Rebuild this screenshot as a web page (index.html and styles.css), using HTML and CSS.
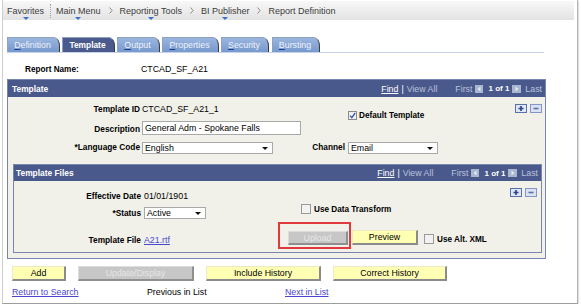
FILE: index.html
```html
<!DOCTYPE html>
<html>
<head>
<meta charset="utf-8">
<link rel="stylesheet" href="styles.css">
</head>
<body>
<div class="frame">
  <div class="crumbs">
    <span class="crumb dd">Favorites</span>
    <span class="dots"></span>
    <span class="crumb dd">Main Menu</span>
    <span class="chev"><svg width="4" height="7" viewBox="0 0 4 7"><path d="M0.5 0.5L3.2 3.5L0.5 6.5" fill="none" stroke="#8a8a8a" stroke-width="1"/></svg></span>
    <span class="crumb dd">Reporting Tools</span>
    <span class="chev"><svg width="4" height="7" viewBox="0 0 4 7"><path d="M0.5 0.5L3.2 3.5L0.5 6.5" fill="none" stroke="#8a8a8a" stroke-width="1"/></svg></span>
    <span class="crumb dd">BI Publisher</span>
    <span class="chev"><svg width="4" height="7" viewBox="0 0 4 7"><path d="M0.5 0.5L3.2 3.5L0.5 6.5" fill="none" stroke="#8a8a8a" stroke-width="1"/></svg></span>
    <span class="crumb">Report Definition</span>
  </div>

  <div class="tabs">
    <span class="tab t1"><u>D</u>efinition</span>
    <span class="tab t2 active">Template</span>
    <span class="tab t3"><u>O</u>utput</span>
    <span class="tab t4"><u>P</u>roperties</span>
    <span class="tab t5"><u>S</u>ecurity</span>
    <span class="tab t6"><u>B</u>ursting</span>
  </div>

  <div class="rname"><span class="rlabel">Report Name:</span><span>CTCAD_SF_A21</span></div>

  <section class="box outer">
    <div class="bar">
      <span class="title">Template</span>
      <div class="nav">
        <span class="find">Find</span><span class="pipe">|</span><span class="dis">View All</span>
        <span class="dis first">First</span>
        <svg class="nicon" width="8" height="8" viewBox="0 0 8 8"><rect width="8" height="8" fill="#a8b6d0"/><path d="M5.5 1.5L2.5 4L5.5 6.5Z" fill="#e3e8f2"/></svg>
        <b class="count">1 of 1</b>
        <svg class="nicon" width="9" height="8" viewBox="0 0 9 8"><rect width="9" height="8" fill="#a8b6d0"/><path d="M3.5 1.5L6.5 4L3.5 6.5Z" fill="#e3e8f2"/></svg>
        <span class="dis last">Last</span>
      </div>
    </div>
    <div class="grid g1">
      <span class="lab">Template ID</span>
      <span class="val">CTCAD_SF_A21_1</span>
      <span></span>
      <span class="chk def">
        <svg width="9" height="9" viewBox="0 0 9 9"><rect x="0.5" y="0.5" width="8" height="8" fill="#eef0f3" stroke="#8c8c8c"/><path d="M2 4.6L3.8 6.6L7.2 2" fill="none" stroke="#3c5aa6" stroke-width="1.3"/></svg>
        <b>Default Template</b>
      </span>
      <span class="pm pm1">
        <svg width="12" height="9" viewBox="0 0 12 9"><rect x="0.5" y="0.5" width="11" height="8" fill="#dfe6f6" stroke="#5a70ad"/><path d="M6 2V7M3.5 4.5H8.5" stroke="#2b3f8c" stroke-width="1.6"/></svg>
        <svg width="12" height="9" viewBox="0 0 12 9"><rect x="0.5" y="0.5" width="11" height="8" fill="#dbe2f2" stroke="#8396c8"/><path d="M3.5 4.5H8.5" stroke="#5a70ad" stroke-width="1.6"/></svg>
      </span>

      <span class="lab">Description</span>
      <span class="input desc">General Adm - Spokane Falls</span>

      <span class="lab">*Language Code</span>
      <span class="select lang">English</span>
      <span class="lab2">Channel</span>
      <span class="select chan">Email</span>
    </div>

    <section class="box inner">
      <div class="bar ibar">
        <span class="title">Template Files</span>
        <div class="nav">
          <span class="find">Find</span><span class="pipe">|</span><span class="dis">View All</span>
          <span class="dis first">First</span>
          <svg class="nicon" width="8" height="8" viewBox="0 0 8 8"><rect width="8" height="8" fill="#a8b6d0"/><path d="M5.5 1.5L2.5 4L5.5 6.5Z" fill="#e3e8f2"/></svg>
          <b class="count">1 of 1</b>
          <svg class="nicon" width="9" height="8" viewBox="0 0 9 8"><rect width="9" height="8" fill="#a8b6d0"/><path d="M3.5 1.5L6.5 4L3.5 6.5Z" fill="#e3e8f2"/></svg>
          <span class="dis last">Last</span>
        </div>
      </div>
      <div class="grid g2">
        <span class="lab eff">Effective Date</span>
        <span class="val eff">01/01/1901</span>
        <span class="pm pm2">
          <svg width="12" height="9" viewBox="0 0 12 9"><rect x="0.5" y="0.5" width="11" height="8" fill="#dfe6f6" stroke="#5a70ad"/><path d="M6 2V7M3.5 4.5H8.5" stroke="#2b3f8c" stroke-width="1.6"/></svg>
          <svg width="12" height="9" viewBox="0 0 12 9"><rect x="0.5" y="0.5" width="11" height="8" fill="#dbe2f2" stroke="#8396c8"/><path d="M3.5 4.5H8.5" stroke="#5a70ad" stroke-width="1.6"/></svg>
        </span>

        <span class="lab">*Status</span>
        <span class="select status">Active</span>
        <span class="chk udt">
          <svg width="10" height="10" viewBox="0 0 10 10"><rect x="0.5" y="0.5" width="9" height="9" fill="#f2f2f2" stroke="#9a9a9a"/></svg>
          <b>Use Data Transform</b>
        </span>

        <span class="lab tf">Template File</span>
        <a class="link tf">A21.rtf</a>
        <span class="upwrap"><span class="btn disabled upload">Upload</span><span class="redbox"></span></span>
        <span class="btn preview">Preview</span>
        <span class="chk alt">
          <svg width="10" height="10" viewBox="0 0 10 10"><rect x="0.5" y="0.5" width="9" height="9" fill="#f2f2f2" stroke="#9a9a9a"/></svg>
          <b>Use Alt. XML</b>
        </span>
      </div>
    </section>
  </section>

  <div class="actions">
    <span class="btn b-add">Add</span>
    <span class="btn disabled b-upd">Update/Display</span>
    <span class="btn b-inc">Include History</span>
    <span class="btn b-cor">Correct History</span>
  </div>

  <div class="links">
    <a class="link">Return to Search</a>
    <span>Previous in List</span>
    <a class="link">Next in List</a>
  </div>
</div>
</body>
</html>
```

FILE: styles.css
```css
* { box-sizing: border-box; }

body {
  margin: 0;
  background: #fff;
  font-family: "Liberation Sans", Arial, sans-serif;
  font-size: 8.8px;
  color: #000;
}

.frame {
  margin-left: 2px;
  width: 576px;
  height: 304px;
  padding-top: 1px;
  border-left: 1px solid #cfcfcf;
  border-right: 1px solid #b4b4b4;
  border-bottom: 1px solid #9d9d9d;
  box-shadow: 1px 1px 1px rgba(0, 0, 0, 0.12);
}

/* breadcrumbs */
.crumbs {
  display: flex;
  align-items: center;
  height: 19px;
  margin-right: 3px;
  padding-left: 4px;
  background: linear-gradient(#f8f8f8, #e2e2e2);
  font-size: 9px;
  color: #3c3c3c;
}
.crumb { position: relative; }
.crumb.dd::after {
  content: "";
  position: absolute;
  left: 50%;
  margin-left: -3px;
  bottom: -4px;
  border-left: 3px solid transparent;
  border-right: 3px solid transparent;
  border-top: 3px solid #3b6fc9;
}
.dots {
  height: 14px;
  border-left: 1px dotted #a0a0a0;
  margin: 0 5px 0 6px;
}
.chev {
  display: flex;
  margin: 0 7px 0 8px;
}

/* tabs */
.tabs {
  display: flex;
  gap: 2px;
  margin: 17px 0 0 4px;
  width: 537px;
  height: 16px;
  border-bottom: 1px solid #c5d4ea;
}
.tab {
  height: 15px;
  display: flex;
  align-items: center;
  justify-content: center;
  padding-right: 2px;
  background: linear-gradient(#9ab5df, #7899cd);
  color: #eef2fa;
  border: 1px solid #8ea0c4;
  border-right-color: #3a3a3a;
  border-bottom: 0;
  border-top-right-radius: 6px 9px;
}
.tab u { text-decoration-color: #1d3f8f; }
.tab.active {
  background: #4a5a8c;
  color: #fff;
  font-weight: bold;
  font-size: 8.4px;
}
.t1 { width: 53px; }
.t2 { width: 53px; }
.t3 { width: 43px; }
.t4 { width: 57px; }
.t5 { width: 48px; }
.t6 { width: 48px; margin-left: 1px; }

/* report name */
.rname {
  display: flex;
  align-items: center;
  height: 16px;
  margin-top: 8px;
  padding-left: 22px;
}
.rlabel { width: 116px; font-weight: bold; font-size: 8.2px; }

/* boxes */
.box { border: 1px solid #7a86ad; }
.outer {
  width: 539px;
  margin: 2px 0 0 4px;
  background: #f1f1ea;
}
.inner {
  margin: 6px 3px 5px 5px;
  padding-bottom: 2px;
}
.bar {
  display: flex;
  align-items: center;
  height: 17px;
  padding: 0 3px 0 4px;
  background: #4a598c;
  color: #fff;
}
.ibar { height: 16px; padding-left: 2px; padding-right: 3px; }
.title { font-weight: bold; font-size: 8.4px; }
.nav {
  margin-left: auto;
  display: flex;
  align-items: center;
}
.find { text-decoration: underline; color: #fff; }
.pipe { margin: 0 3px; color: #fff; }
.dis { color: #b9c3dc; }
.first { margin: 0 3px 0 18px; }
.count { margin: 0 3px 0 5px; font-size: 8px; }
.last { margin-left: 4px; }

/* grids */
.grid { display: grid; }
.g1 {
  grid-template-columns: 134px 159px 47px 160px 1fr;
  grid-template-rows: 24px 15px 22px;
}
.g2 {
  grid-template-columns: 130px 135px 71px 71px 1fr;
  grid-template-rows: 23px 18px 28px;
}
.lab {
  grid-column: 1;
  align-self: center;
  text-align: right;
  padding-right: 2px;
  font-weight: bold;
  font-size: 8.3px;
}
.g2 .lab { padding-right: 3px; }
.lab2 {
  align-self: center;
  text-align: right;
  padding-right: 3px;
  font-weight: bold;
  font-size: 8.3px;
}
.val { align-self: center; }
.lab.eff, .val.eff { align-self: end; padding-bottom: 3px; }
.lab.tf, .link.tf { align-self: end; padding-bottom: 5px; }

.chk {
  display: flex;
  align-items: center;
  gap: 2px;
}
.chk b { font-weight: bold; font-size: 8.2px; }
.def { align-self: end; padding-bottom: 1px; }
.udt {
  grid-column: 3 / span 2;
  align-self: start;
  margin-left: 22px;
  gap: 3px;
}
.alt { align-self: end; margin: 0 0 6px 3px; gap: 3px; }

.pm {
  display: flex;
  gap: 3px;
  justify-self: end;
  align-self: start;
}
.pm1 { margin: 7px 3px 0 0; }
.pm2 { grid-column: 5; margin: 7px 4px 0 0; }

.input, .select {
  display: flex;
  align-items: center;
  background: #fff;
  border: 1px solid #a9a9a9;
  padding-left: 2px;
  position: relative;
}
.desc { height: 14px; align-self: start; }
.select { height: 12px; align-self: center; }
.select::after {
  content: "";
  position: absolute;
  right: 4px;
  top: 4px;
  border-left: 3px solid transparent;
  border-right: 3px solid transparent;
  border-top: 3px solid #111;
}
.lang { width: 131px; margin-top: 2px; }
.chan { width: 90px; margin-top: 2px; }
.status { width: 62px; }

.link {
  color: #4c46cf;
  text-decoration: underline;
}

/* buttons */
.btn {
  display: flex;
  align-items: center;
  justify-content: center;
  height: 15px;
  background: #ffffb4;
  border: 1px solid;
  border-color: #ecebc8 #8b8b8b #8b8b8b #ecebc8;
  border-right-width: 2px;
  border-bottom-width: 2px;
}
.btn.disabled {
  background: #c7c7c7;
  color: #e6e6e6;
  border-color: #dcdcdc #8f8f8f #8f8f8f #dcdcdc;
}
.upwrap {
  position: relative;
  align-self: end;
  margin: 0 0 5px 9px;
  width: 60px;
}
.upload { height: 14px; }
.redbox {
  position: absolute;
  left: -10px;
  top: -9px;
  right: -3px;
  bottom: -4px;
  border: 2px solid #e0393e;
}
.preview {
  align-self: end;
  margin: 0 0 5px 2px;
  width: 66px;
}

.actions {
  display: flex;
  gap: 12px;
  margin: 7px 0 0 9px;
}
.b-add { width: 54px; }
.b-upd { width: 116px; }
.b-inc { width: 115px; }
.b-cor { width: 114px; }

.links {
  display: grid;
  grid-template-columns: 135px 138px auto;
  align-items: center;
  height: 16px;
  margin: 3px 0 0 9px;
}
.links > * { justify-self: start; }
```
